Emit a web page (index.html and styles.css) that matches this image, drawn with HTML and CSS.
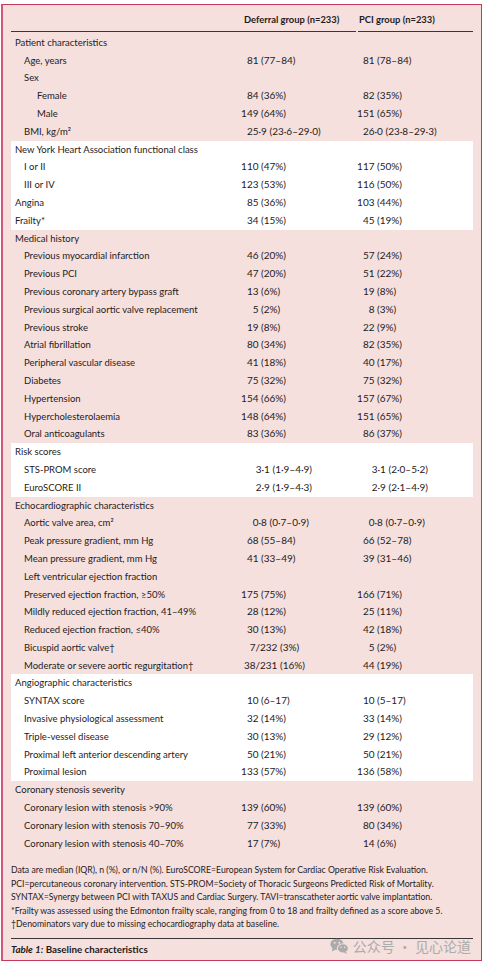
FILE: index.html
```html
<!DOCTYPE html>
<html lang="en">
<head>
  <meta charset="UTF-8" />
  <meta name="viewport" content="width=device-width, initial-scale=1.0"/>
  <title>Table 1: Baseline characteristics</title>
  <link rel="stylesheet" href="styles.css">
</head>
<body>
<div class="sheet">

  <div class="head">
    <div></div>
    <div class="th">Deferral group (n=233)</div>
    <div class="th th-pci">PCI group (n=233)</div>
  </div>

  <div class="tbl">

    <div class="sec">
      <div class="row"><span class="lbl">Patient characteristics</span><span></span><span></span></div>
      <div class="row"><span class="lbl l1">Age, years</span><span class="val"><span class="n">81</span> (77–84)</span><span class="val"><span class="n">81</span> (78–84)</span></div>
      <div class="row"><span class="lbl l1">Sex</span><span></span><span></span></div>
      <div class="row"><span class="lbl l2">Female</span><span class="val"><span class="n">84</span> (36%)</span><span class="val"><span class="n">82</span> (35%)</span></div>
      <div class="row"><span class="lbl l2">Male</span><span class="val"><span class="n">149</span> (64%)</span><span class="val"><span class="n">151</span> (65%)</span></div>
      <div class="row"><span class="lbl l1">BMI, kg/m²</span><span class="val"><span class="n">25</span>·9 (23·6–29·0)</span><span class="val"><span class="n">26</span>·0 (23·8–29·3)</span></div>
    </div>

    <div class="sec white">
      <div class="row"><span class="lbl">New York Heart Association functional class</span><span></span><span></span></div>
      <div class="row"><span class="lbl l1">I or II</span><span class="val"><span class="n">110</span> (47%)</span><span class="val"><span class="n">117</span> (50%)</span></div>
      <div class="row"><span class="lbl l1">III or IV</span><span class="val"><span class="n">123</span> (53%)</span><span class="val"><span class="n">116</span> (50%)</span></div>
      <div class="row"><span class="lbl">Angina</span><span class="val"><span class="n">85</span> (36%)</span><span class="val"><span class="n">103</span> (44%)</span></div>
      <div class="row"><span class="lbl">Frailty*</span><span class="val"><span class="n">34</span> (15%)</span><span class="val"><span class="n">45</span> (19%)</span></div>
    </div>

    <div class="sec">
      <div class="row"><span class="lbl">Medical history</span><span></span><span></span></div>
      <div class="row"><span class="lbl l1">Previous myocardial infarction</span><span class="val"><span class="n">46</span> (20%)</span><span class="val"><span class="n">57</span> (24%)</span></div>
      <div class="row"><span class="lbl l1">Previous PCI</span><span class="val"><span class="n">47</span> (20%)</span><span class="val"><span class="n">51</span> (22%)</span></div>
      <div class="row"><span class="lbl l1">Previous coronary artery bypass graft</span><span class="val"><span class="n">13</span> (6%)</span><span class="val"><span class="n">19</span> (8%)</span></div>
      <div class="row"><span class="lbl l1">Previous surgical aortic valve replacement</span><span class="val"><span class="n">5</span> (2%)</span><span class="val"><span class="n">8</span> (3%)</span></div>
      <div class="row"><span class="lbl l1">Previous stroke</span><span class="val"><span class="n">19</span> (8%)</span><span class="val"><span class="n">22</span> (9%)</span></div>
      <div class="row"><span class="lbl l1">Atrial fibrillation</span><span class="val"><span class="n">80</span> (34%)</span><span class="val"><span class="n">82</span> (35%)</span></div>
      <div class="row"><span class="lbl l1">Peripheral vascular disease</span><span class="val"><span class="n">41</span> (18%)</span><span class="val"><span class="n">40</span> (17%)</span></div>
      <div class="row"><span class="lbl l1">Diabetes</span><span class="val"><span class="n">75</span> (32%)</span><span class="val"><span class="n">75</span> (32%)</span></div>
      <div class="row"><span class="lbl l1">Hypertension</span><span class="val"><span class="n">154</span> (66%)</span><span class="val"><span class="n">157</span> (67%)</span></div>
      <div class="row"><span class="lbl l1">Hypercholesterolaemia</span><span class="val"><span class="n">148</span> (64%)</span><span class="val"><span class="n">151</span> (65%)</span></div>
      <div class="row"><span class="lbl l1">Oral anticoagulants</span><span class="val"><span class="n">83</span> (36%)</span><span class="val"><span class="n">86</span> (37%)</span></div>
    </div>

    <div class="sec white">
      <div class="row"><span class="lbl">Risk scores</span><span></span><span></span></div>
      <div class="row"><span class="lbl l1">STS-PROM score</span><span class="val"><span class="n n-r">3</span>·1 (1·9–4·9)</span><span class="val"><span class="n n-r">3</span>·1 (2·0–5·2)</span></div>
      <div class="row"><span class="lbl l1">EuroSCORE II</span><span class="val"><span class="n n-r">2</span>·9 (1·9–4·3)</span><span class="val"><span class="n n-r">2</span>·9 (2·1–4·9)</span></div>
    </div>

    <div class="sec">
      <div class="row"><span class="lbl">Echocardiographic characteristics</span><span></span><span></span></div>
      <div class="row"><span class="lbl l1">Aortic valve area, cm²</span><span class="val"><span class="n">0</span>·8 (0·7–0·9)</span><span class="val"><span class="n">0</span>·8 (0·7–0·9)</span></div>
      <div class="row"><span class="lbl l1">Peak pressure gradient, mm Hg</span><span class="val"><span class="n">68</span> (55–84)</span><span class="val"><span class="n">66</span> (52–78)</span></div>
      <div class="row"><span class="lbl l1">Mean pressure gradient, mm Hg</span><span class="val"><span class="n">41</span> (33–49)</span><span class="val"><span class="n">39</span> (31–46)</span></div>
      <div class="row"><span class="lbl l1">Left ventricular ejection fraction</span><span></span><span></span></div>
      <div class="row"><span class="lbl l1">Preserved ejection fraction, ≥50%</span><span class="val"><span class="n">175</span> (75%)</span><span class="val"><span class="n">166</span> (71%)</span></div>
      <div class="row"><span class="lbl l1">Mildly reduced ejection fraction, 41–49%</span><span class="val"><span class="n">28</span> (12%)</span><span class="val"><span class="n">25</span> (11%)</span></div>
      <div class="row"><span class="lbl l1">Reduced ejection fraction, ≤40%</span><span class="val"><span class="n">30</span> (13%)</span><span class="val"><span class="n">42</span> (18%)</span></div>
      <div class="row"><span class="lbl l1">Bicuspid aortic valve†</span><span class="val"><span class="n n-l">7</span>/232 (3%)</span><span class="val"><span class="n">5</span> (2%)</span></div>
      <div class="row"><span class="lbl l1">Moderate or severe aortic regurgitation†</span><span class="val"><span class="n n-l">38</span>/231 (16%)</span><span class="val"><span class="n">44</span> (19%)</span></div>
    </div>

    <div class="sec white">
      <div class="row"><span class="lbl">Angiographic characteristics</span><span></span><span></span></div>
      <div class="row"><span class="lbl l1">SYNTAX score</span><span class="val"><span class="n">10</span> (6–17)</span><span class="val"><span class="n">10</span> (5–17)</span></div>
      <div class="row"><span class="lbl l1">Invasive physiological assessment</span><span class="val"><span class="n">32</span> (14%)</span><span class="val"><span class="n">33</span> (14%)</span></div>
      <div class="row"><span class="lbl l1">Triple-vessel disease</span><span class="val"><span class="n">30</span> (13%)</span><span class="val"><span class="n">29</span> (12%)</span></div>
      <div class="row"><span class="lbl l1">Proximal left anterior descending artery</span><span class="val"><span class="n">50</span> (21%)</span><span class="val"><span class="n">50</span> (21%)</span></div>
      <div class="row"><span class="lbl l1">Proximal lesion</span><span class="val"><span class="n">133</span> (57%)</span><span class="val"><span class="n">136</span> (58%)</span></div>
    </div>

    <div class="sec">
      <div class="row"><span class="lbl">Coronary stenosis severity</span><span></span><span></span></div>
      <div class="row"><span class="lbl l1">Coronary lesion with stenosis &gt;90%</span><span class="val"><span class="n">139</span> (60%)</span><span class="val"><span class="n">139</span> (60%)</span></div>
      <div class="row"><span class="lbl l1">Coronary lesion with stenosis 70–90%</span><span class="val"><span class="n">77</span> (33%)</span><span class="val"><span class="n">80</span> (34%)</span></div>
      <div class="row"><span class="lbl l1">Coronary lesion with stenosis 40–70%</span><span class="val"><span class="n">17</span> (7%)</span><span class="val"><span class="n">14</span> (6%)</span></div>
    </div>

  </div>

  <p class="notes">
    Data are median (IQR), n (%), or n/N (%). EuroSCORE=European System for Cardiac Operative Risk Evaluation.<br>
    PCI=percutaneous coronary intervention. STS-PROM=Society of Thoracic Surgeons Predicted Risk of Mortality.<br>
    SYNTAX=Synergy between PCI with TAXUS and Cardiac Surgery. TAVI=transcatheter aortic valve implantation.<br>
    *Frailty was assessed using the Edmonton frailty scale, ranging from 0 to 18 and frailty defined as a score above 5.<br>
    †Denominators vary due to missing echocardiography data at baseline.
  </p>

  <div class="caption"><i>Table 1:</i> Baseline characteristics</div>

  <div class="mark">
    <svg width="19" height="16" viewBox="0 0 19 16">
      <ellipse cx="7" cy="6.3" rx="6.6" ry="5.6" fill="#ababab"/>
      <polygon points="2.6,10 1.8,13.6 5.8,11.6" fill="#ababab"/>
      <circle cx="4.7" cy="4.8" r="0.95" fill="#f5e0dd"/>
      <circle cx="9.3" cy="4.8" r="0.95" fill="#f5e0dd"/>
      <ellipse cx="12.9" cy="10.4" rx="5.5" ry="4.7" fill="#ababab" stroke="#f5e0dd" stroke-width="1.1"/>
      <polygon points="15.8,13.8 17.2,15.8 13.8,14.8" fill="#ababab"/>
      <circle cx="11" cy="9.3" r="0.8" fill="#f5e0dd"/>
      <circle cx="14.8" cy="9.3" r="0.8" fill="#f5e0dd"/>
    </svg>
    <span>公众号 · 见心论道</span>
  </div>

</div>
</body>
</html>
```

FILE: styles.css
```css
* {
  box-sizing: border-box;
  margin: 0;
  padding: 0;
}

body {
  font-family: Lato, "Liberation Sans", sans-serif;
  color: #1f1b1c;
  background: #fff;
}

.sheet {
  position: relative;
  width: 481px;
  height: 957px;
  margin: 4px 0 0 1px;
  padding: 0 8px;
  background: #f5e0dd;
  border: 1px solid #c6385b;
  border-left: 2px solid #d1577a;
}

/* column header */
.head {
  display: grid;
  grid-template-columns: 229px 116px 1fr;
  padding-top: 6px;
}

.head > div {
  border-bottom: 1px solid #3a3536;
  padding-bottom: 2px;
}

.th {
  font-size: 9.4px;
  font-weight: 700;
  line-height: 17.8px;
  padding-left: 4px;
}

.th-pci {
  margin-left: 2px;
  padding-left: 1px;
}

/* table body */
.tbl {
  margin-top: 2px;
  font-size: 10px;
}

.sec.white {
  background: #fff;
}

.row {
  display: grid;
  grid-template-columns: 229px 116px 1fr;
  height: 17.8px;
  line-height: 17.8px;
  white-space: nowrap;
}

.lbl {
  padding-left: 4px;
  font-size: 9.5px;
}

.lbl.l1 {
  padding-left: 13px;
}

.lbl.l2 {
  padding-left: 26px;
}

.n {
  display: inline-block;
  width: 18.5px;
  text-align: right;
}

.n.n-r {
  width: 21.5px;
}

.n.n-l {
  width: 15.5px;
}

/* footnotes */
.notes {
  margin-top: 10.6px;
  font-size: 8.7px;
  line-height: 13.5px;
  white-space: nowrap;
}

.caption {
  margin-top: 7px;
  border-top: 1px solid #3a3536;
  padding-top: 3px;
  font-size: 9.8px;
  font-weight: 700;
  line-height: 14px;
}

.mark {
  position: absolute;
  right: 10px;
  bottom: 6px;
  display: flex;
  align-items: center;
  gap: 4px;
  font-family: "Noto Sans CJK SC", sans-serif;
  font-size: 14px;
  line-height: 16px;
  color: #ababab;
}
```
